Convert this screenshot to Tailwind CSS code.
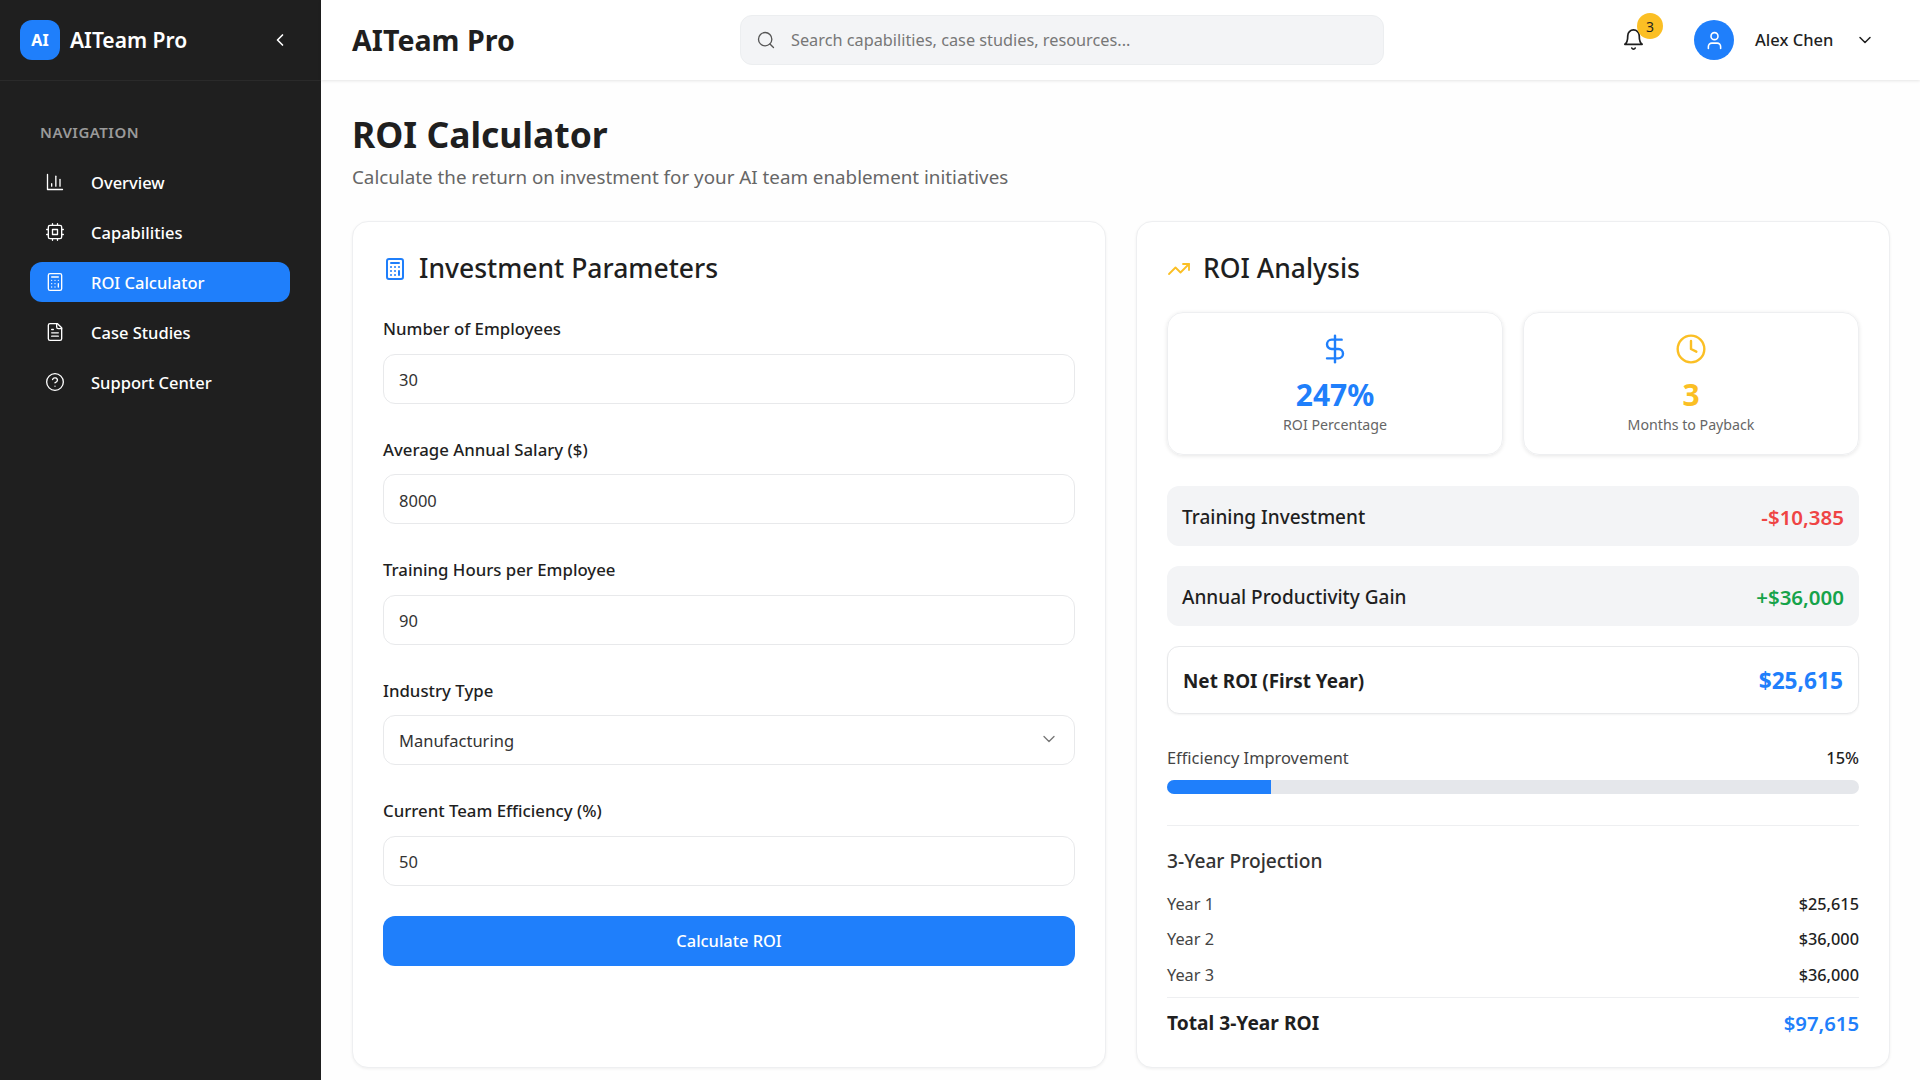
<!DOCTYPE html>
<html lang="en">
<head>
  <meta charset="UTF-8">
  <title>AITeam Pro - ROI Calculator</title>
  <script src="https://cdn.jsdelivr.net/npm/@tailwindcss/browser@4"></script>
</head>
<body class="h-screen overflow-hidden flex bg-[#fefefe] text-[#1f1f1f] font-['Noto_Sans',sans-serif]">

  <!-- sidebar -->
  <aside class="w-[321px] shrink-0 h-full bg-[#1f1f1f] text-white">
    <div class="h-[81px] pl-5 pr-[31px] flex items-center border-b border-white/5">
      <div class="w-10 h-10 rounded-xl bg-[#1f7ffb] flex items-center justify-center font-bold text-[16px]">AI</div>
      <span class="ml-[10px] pt-[2px] text-[21px] font-semibold">AITeam Pro</span>
      <svg class="ml-auto w-5 h-5" viewBox="0 0 24 24" fill="none" stroke="currentColor" stroke-width="2" stroke-linecap="round" stroke-linejoin="round"><path d="m15 18-6-6 6-6"/></svg>
    </div>
    <div class="pt-[41px] pl-[30px] pr-[31px]">
      <div class="pl-[10px] text-[15px] leading-5 font-semibold tracking-[0.5px] text-[#9a9a9a] mb-[20px]">NAVIGATION</div>
      <nav class="flex flex-col gap-[10px] text-[16.5px] font-medium">
        <a class="h-10 flex items-center pl-[15px] rounded-xl">
          <svg class="w-5 h-5 mr-[26px]" viewBox="0 0 24 24" fill="none" stroke="currentColor" stroke-width="1.6" stroke-linecap="round" stroke-linejoin="round"><path d="M3 3v18h18"/><path d="M18 17V9"/><path d="M13 17V5"/><path d="M8 17v-3"/></svg>
          <span class="pt-[3px]">Overview</span>
        </a>
        <a class="h-10 flex items-center pl-[15px] rounded-xl">
          <svg class="w-5 h-5 mr-[26px]" viewBox="0 0 24 24" fill="none" stroke="currentColor" stroke-width="1.6" stroke-linecap="round" stroke-linejoin="round"><rect x="4" y="4" width="16" height="16" rx="2"/><rect x="9" y="9" width="6" height="6"/><path d="M15 2v2M15 20v2M2 15h2M2 9h2M20 15h2M20 9h2M9 2v2M9 20v2"/></svg>
          <span class="pt-[3px]">Capabilities</span>
        </a>
        <a class="h-10 flex items-center pl-[15px] rounded-xl bg-[#1f7ffb]">
          <svg class="w-5 h-5 mr-[26px]" viewBox="0 0 24 24" fill="none" stroke="currentColor" stroke-width="1.6" stroke-linecap="round" stroke-linejoin="round"><rect x="4" y="2" width="16" height="20" rx="2"/><path d="M8 6h8M16 14v4M16 10h.01M12 10h.01M8 10h.01M12 14h.01M8 14h.01M12 18h.01M8 18h.01"/></svg>
          <span class="pt-[3px]">ROI Calculator</span>
        </a>
        <a class="h-10 flex items-center pl-[15px] rounded-xl">
          <svg class="w-5 h-5 mr-[26px]" viewBox="0 0 24 24" fill="none" stroke="currentColor" stroke-width="1.6" stroke-linecap="round" stroke-linejoin="round"><path d="M15 2H6a2 2 0 0 0-2 2v16a2 2 0 0 0 2 2h12a2 2 0 0 0 2-2V7Z"/><path d="M14 2v4a2 2 0 0 0 2 2h4"/><path d="M10 9H8M16 13H8M16 17H8"/></svg>
          <span class="pt-[3px]">Case Studies</span>
        </a>
        <a class="h-10 flex items-center pl-[15px] rounded-xl">
          <svg class="w-5 h-5 mr-[26px]" viewBox="0 0 24 24" fill="none" stroke="currentColor" stroke-width="1.6" stroke-linecap="round" stroke-linejoin="round"><circle cx="12" cy="12" r="10"/><path d="M9.09 9a3 3 0 0 1 5.83 1c0 2-3 3-3 3"/><path d="M12 17h.01"/></svg>
          <span class="pt-[3px]">Support Center</span>
        </a>
      </nav>
    </div>
  </aside>

  <div class="flex-1 flex flex-col min-w-0">
    <!-- header -->
    <header class="h-20 shrink-0 bg-white shadow-[0_1px_3px_rgba(0,0,0,0.1)] flex items-center pl-[31px] pr-[45px]">
      <div class="w-[388px] text-[28.6px] font-bold">AITeam Pro</div>
      <div class="w-[644px] h-[50px] bg-[#f3f4f6] border border-[#eceef0] rounded-xl flex items-center pl-[15px] text-[#777]">
        <svg class="w-5 h-5 mr-[15px] text-[#555]" viewBox="0 0 24 24" fill="none" stroke="currentColor" stroke-width="1.6" stroke-linecap="round" stroke-linejoin="round"><circle cx="11" cy="11" r="8"/><path d="m21 21-4.3-4.3"/></svg>
        <span class="pt-[1px] text-[16.3px]">Search capabilities, case studies, resources...</span>
      </div>
      <div class="relative ml-[238px] w-6 h-6">
        <svg class="w-[23px] h-[23px]" viewBox="0 0 24 24" fill="none" stroke="currentColor" stroke-width="1.8" stroke-linecap="round" stroke-linejoin="round"><path d="M6 8a6 6 0 0 1 12 0c0 7 3 9 3 9H3s3-2 3-9"/><path d="M10.300 21a1.94 1.94 0 0 0 3.4 0"/></svg>
        <span class="absolute -top-[15px] left-[15px] w-[26px] h-[26px] rounded-full bg-[#fbbf24] flex items-center justify-center text-[14px]">3</span>
      </div>
      <div class="ml-[48px] w-10 h-10 rounded-full bg-[#1f7ffb] text-white flex items-center justify-center">
        <svg class="w-[21px] h-[21px]" viewBox="0 0 24 24" fill="none" stroke="currentColor" stroke-width="1.8" stroke-linecap="round" stroke-linejoin="round"><path d="M19 21v-2a4 4 0 0 0-4-4H9a4 4 0 0 0-4 4v2"/><circle cx="12" cy="7" r="4"/></svg>
      </div>
      <span class="ml-[21px] text-[16.5px] font-medium">Alex Chen</span>
      <svg class="ml-auto w-5 h-5" viewBox="0 0 24 24" fill="none" stroke="currentColor" stroke-width="1.8" stroke-linecap="round" stroke-linejoin="round"><path d="m6 9 6 6 6-6"/></svg>
    </header>

    <main class="flex-1 pl-[31px] pr-[30px] pt-[30px] min-h-0">
      <h1 class="text-[35.5px] leading-[48px] font-bold">ROI Calculator</h1>
      <p class="text-[18.8px] leading-[28px] text-[#666] mt-[5px] mb-[30px]">Calculate the return on investment for your AI team enablement initiatives</p>

      <div class="grid grid-cols-2 gap-[30px] items-start">
        <!-- parameters -->
        <section class="h-[847px] bg-white border border-[#eeeff1] rounded-2xl shadow-[0_1px_3px_rgba(0,0,0,0.06)] p-[30px]">
          <h2 class="h-[33px] flex items-center gap-[12px] text-[26.5px] font-medium">
            <svg class="w-6 h-6 text-[#1f7ffb]" viewBox="0 0 24 24" fill="none" stroke="currentColor" stroke-width="2" stroke-linecap="round" stroke-linejoin="round"><rect x="4" y="2" width="16" height="20" rx="2"/><path d="M8 6h8M16 14v4M16 10h.01M12 10h.01M8 10h.01M12 14h.01M8 14h.01M12 18h.01M8 18h.01"/></svg>
            Investment Parameters
          </h2>
          <form class="mt-[31px] flex flex-col gap-[33px]">
            <div>
              <label class="block h-[26px] mb-[11.5px] text-[16.8px] leading-[26px] font-medium">Number of Employees</label>
              <input type="text" value="30" class="w-full h-[50px] px-[15px] pt-[2px] text-[16.5px] text-[#333] bg-white border border-[#e8e9eb] rounded-xl">
            </div>
            <div>
              <label class="block h-[26px] mb-[11.5px] text-[16.8px] leading-[26px] font-medium">Average Annual Salary ($)</label>
              <input type="text" value="8000" class="w-full h-[50px] px-[15px] pt-[2px] text-[16.5px] text-[#333] bg-white border border-[#e8e9eb] rounded-xl">
            </div>
            <div>
              <label class="block h-[26px] mb-[11.5px] text-[16.8px] leading-[26px] font-medium">Training Hours per Employee</label>
              <input type="text" value="90" class="w-full h-[50px] px-[15px] pt-[2px] text-[16.5px] text-[#333] bg-white border border-[#e8e9eb] rounded-xl">
            </div>
            <div>
              <label class="block h-[26px] mb-[11.5px] text-[16.8px] leading-[26px] font-medium">Industry Type</label>
              <div class="relative">
                <select class="appearance-none w-full h-[50px] px-[15px] pt-[2px] text-[16.5px] text-[#333] bg-white border border-[#e8e9eb] rounded-xl">
                  <option>Manufacturing</option>
                </select>
                <svg class="absolute right-[16px] top-[14px] w-5 h-5 text-[#777] pointer-events-none" viewBox="0 0 24 24" fill="none" stroke="currentColor" stroke-width="1.6" stroke-linecap="round" stroke-linejoin="round"><path d="m6 9 6 6 6-6"/></svg>
              </div>
            </div>
            <div>
              <label class="block h-[26px] mb-[11.5px] text-[16.8px] leading-[26px] font-medium">Current Team Efficiency (%)</label>
              <input type="text" value="50" class="w-full h-[50px] px-[15px] pt-[2px] text-[16.5px] text-[#333] bg-white border border-[#e8e9eb] rounded-xl">
            </div>
          </form>
          <button class="mt-[30px] w-full h-[50px] pt-[2px] bg-[#1f7ffb] text-white text-[16.4px] font-medium rounded-xl">Calculate ROI</button>
        </section>

        <!-- analysis -->
        <section class="h-[847px] bg-white border border-[#eeeff1] rounded-2xl shadow-[0_1px_3px_rgba(0,0,0,0.06)] p-[30px]">
          <h2 class="h-[33px] flex items-center gap-[12px] text-[26.5px] font-medium">
            <svg class="w-6 h-6 text-[#fbbf24]" viewBox="0 0 24 24" fill="none" stroke="currentColor" stroke-width="1.8" stroke-linecap="round" stroke-linejoin="round"><path d="M22 7 13.500 15.500 8.500 10.500 2 17"/><path d="M16 7h6v6"/></svg>
            ROI Analysis
          </h2>
          <div class="mt-[27px] grid grid-cols-2 gap-[20px]">
            <div class="h-[143px] border border-[#eeeff1] rounded-2xl shadow-[0_1px_4px_rgba(0,0,0,0.1)] flex flex-col items-center pt-5">
              <svg class="w-8 h-8 text-[#1f7ffb]" viewBox="0 0 24 24" fill="none" stroke="currentColor" stroke-width="1.8" stroke-linecap="round" stroke-linejoin="round"><path d="M12 2v20"/><path d="M17 5H9.500a3.500 3.500 0 0 0 0 7h5a3.500 3.500 0 0 1 0 7H6"/></svg>
              <div class="mt-[13px] text-[30px] leading-[34px] font-bold text-[#1f7ffb]">247%</div>
              <div class="mt-[3px] text-[14.2px] leading-5 text-[#666]">ROI Percentage</div>
            </div>
            <div class="h-[143px] border border-[#eeeff1] rounded-2xl shadow-[0_1px_4px_rgba(0,0,0,0.1)] flex flex-col items-center pt-5">
              <svg class="w-8 h-8 text-[#fbbf24]" viewBox="0 0 24 24" fill="none" stroke="currentColor" stroke-width="1.8" stroke-linecap="round" stroke-linejoin="round"><circle cx="12" cy="12" r="10"/><path d="M12 6v6l4 2"/></svg>
              <div class="mt-[13px] text-[30px] leading-[34px] font-bold text-[#fbbf24]">3</div>
              <div class="mt-[3px] text-[14.2px] leading-5 text-[#666]">Months to Payback</div>
            </div>
          </div>

          <div class="mt-[31px] h-[60px] px-[15px] pt-[2px] bg-[#f3f4f6] rounded-xl flex items-center justify-between">
            <span class="text-[19px] font-medium">Training Investment</span>
            <span class="text-[20.5px] font-semibold text-[#ef4444]">-$10,385</span>
          </div>
          <div class="mt-5 h-[60px] px-[15px] pt-[2px] bg-[#f3f4f6] rounded-xl flex items-center justify-between">
            <span class="text-[19px] font-medium">Annual Productivity Gain</span>
            <span class="text-[20.5px] font-semibold text-[#16a34a]">+$36,000</span>
          </div>
          <div class="mt-5 h-[68px] px-[15px] pt-[2px] bg-white border border-[#e8e9eb] rounded-xl shadow-[0_1px_2px_rgba(0,0,0,0.05)] flex items-center justify-between">
            <span class="text-[18.9px] font-bold">Net ROI (First Year)</span>
            <span class="text-[22.7px] font-bold text-[#1f7ffb]">$25,615</span>
          </div>

          <div class="mt-[32px] flex justify-between text-[16.4px] leading-6">
            <span class="text-[#444]">Efficiency Improvement</span>
            <span class="font-medium">15%</span>
          </div>
          <div class="mt-[10px] h-[14px] rounded-full bg-[#e5e7eb] overflow-hidden">
            <div class="h-full bg-[#1f7ffb]" style="width: 15%"></div>
          </div>

          <div class="mt-[31px] pt-[23px] border-t border-[#eeeff1]">
            <h3 class="text-[19.2px] leading-6 font-medium text-[#333]">3-Year Projection</h3>
            <div class="mt-[19px] flex flex-col gap-[11.4px] text-[16.3px] leading-6">
              <div class="flex justify-between"><span class="text-[#444]">Year 1</span><span class="font-medium">$25,615</span></div>
              <div class="flex justify-between"><span class="text-[#444]">Year 2</span><span class="font-medium">$36,000</span></div>
              <div class="flex justify-between"><span class="text-[#444]">Year 3</span><span class="font-medium">$36,000</span></div>
            </div>
            <div class="mt-[10px] pt-[13px] border-t border-[#eeeff1] flex justify-between leading-6 font-bold">
              <span class="text-[19.2px]">Total 3-Year ROI</span>
              <span class="text-[20.3px] text-[#1f7ffb] font-semibold">$97,615</span>
            </div>
          </div>
        </section>
      </div>
    </main>
  </div>
</body>
</html>
